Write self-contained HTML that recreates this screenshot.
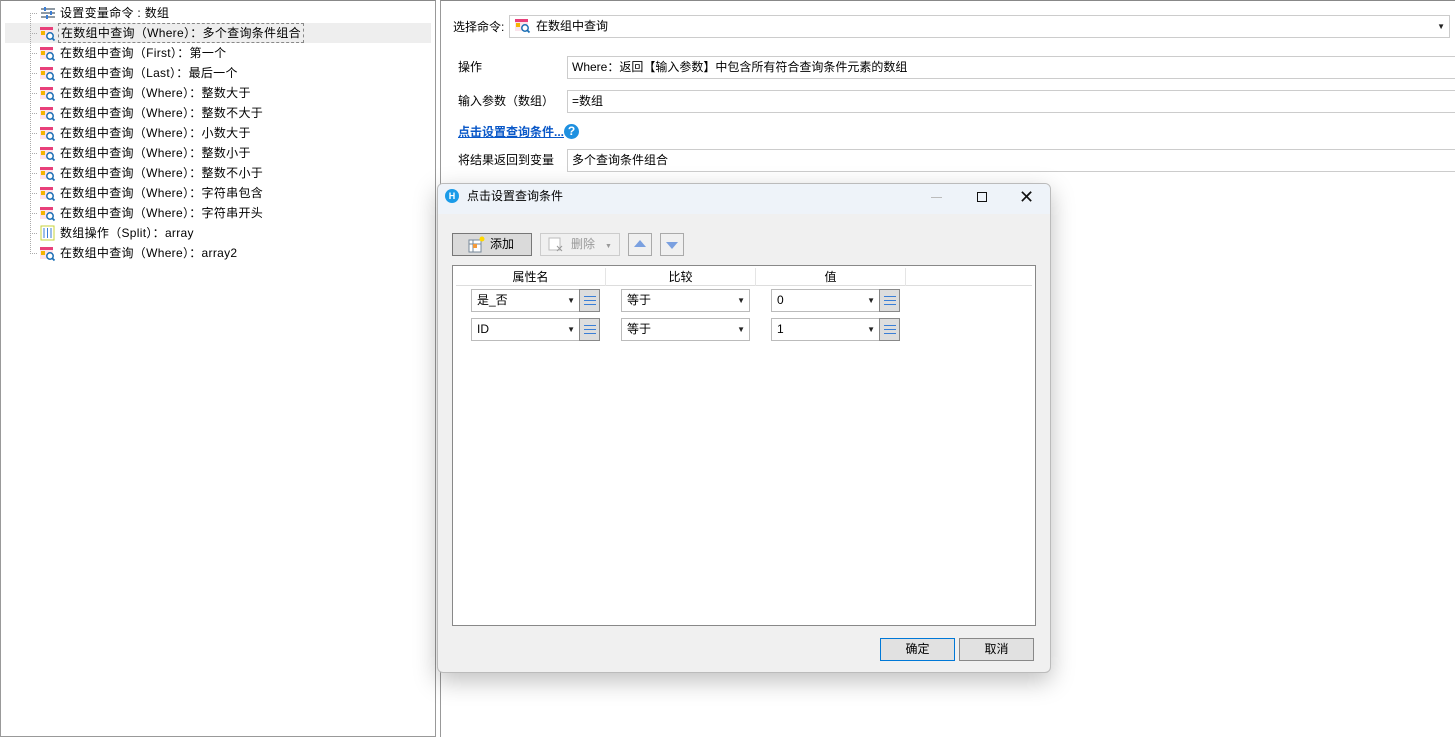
<!DOCTYPE html><html><head><meta charset="utf-8"><style>
*{box-sizing:border-box;margin:0;padding:0}
body{width:1455px;height:737px;background:#fff;position:relative;overflow:hidden;font-family:"Liberation Sans","Noto Sans CJK SC",sans-serif;font-size:12px;color:#000}
.a{position:absolute}
.row{position:absolute;left:60px;height:20px;line-height:20px;white-space:nowrap;letter-spacing:0.3px}
.inp{position:absolute;border:1px solid #ccc;background:#fff;height:23px;line-height:21px;padding-left:4px;white-space:nowrap}
.cb{position:absolute;border:1px solid #bbb;background:#fff;height:23px;line-height:21px;padding-left:5px}
.cb:after{content:"▼";position:absolute;right:4px;top:0;font-size:8px;color:#222}
.eb{position:absolute;width:21px;height:23px;border:1px solid #888;background:#ddd}
.btn{position:absolute;height:23px;line-height:21px;text-align:center;border:1px solid #888;background:#e1e1e1}
</style></head><body>
<div class="a" style="left:0;top:0;width:436px;height:737px;border:1px solid #999;border-top-color:#888"></div>
<div class="a" style="left:5px;top:23px;width:426px;height:20px;background:#eee"></div>
<div class="a" style="left:30px;top:13px;width:1px;height:241px;border-left:1px dotted #aaa"></div>
<svg class="a" style="left:0;top:0" width="440" height="270">
<g stroke="#aaa" stroke-dasharray="1 1">
<line x1="30" y1="13.5" x2="38" y2="13.5"/><line x1="30" y1="33.5" x2="38" y2="33.5"/><line x1="30" y1="53.5" x2="38" y2="53.5"/><line x1="30" y1="73.5" x2="38" y2="73.5"/><line x1="30" y1="93.5" x2="38" y2="93.5"/><line x1="30" y1="113.5" x2="38" y2="113.5"/><line x1="30" y1="133.5" x2="38" y2="133.5"/><line x1="30" y1="153.5" x2="38" y2="153.5"/><line x1="30" y1="173.5" x2="38" y2="173.5"/><line x1="30" y1="193.5" x2="38" y2="193.5"/><line x1="30" y1="213.5" x2="38" y2="213.5"/><line x1="30" y1="233.5" x2="38" y2="233.5"/><line x1="30" y1="253.5" x2="38" y2="253.5"/></g>
<g stroke="#456" stroke-width="1.2"><line x1="41" y1="9" x2="55" y2="9"/><line x1="41" y1="13" x2="55" y2="13"/><line x1="41" y1="17" x2="55" y2="17"/></g>
<g fill="#3a7ed6"><rect x="44" y="7" width="2" height="4"/><rect x="50" y="11" width="2" height="4"/><rect x="46" y="15" width="2" height="4"/></g>
<defs><g id="q"><rect x="0" y="0" width="13" height="3" fill="#e8407a"/><rect x="0" y="3" width="13" height="9" fill="#fbe3ea"/><rect x="1" y="4" width="4" height="4" fill="#f5b400"/><circle cx="10" cy="9" r="3.2" fill="#fff" stroke="#1b6fb5" stroke-width="1.5"/><line x1="12" y1="11" x2="14.5" y2="13.5" stroke="#1b6fb5" stroke-width="1.8"/></g></defs>
<use href="#q" x="40" y="27"/><use href="#q" x="40" y="47"/><use href="#q" x="40" y="67"/><use href="#q" x="40" y="87"/><use href="#q" x="40" y="107"/><use href="#q" x="40" y="127"/><use href="#q" x="40" y="147"/><use href="#q" x="40" y="167"/><use href="#q" x="40" y="187"/><use href="#q" x="40" y="207"/><use href="#q" x="40" y="247"/>
<rect x="41" y="226" width="13" height="14" fill="#fff" stroke="#c7d33a"/><g stroke="#3a7ed6"><line x1="44" y1="228" x2="44" y2="238"/><line x1="47.5" y1="228" x2="47.5" y2="238"/><line x1="51" y1="228" x2="51" y2="238"/></g>
</svg>
<div class="row" style="top:3px">设置变量命令 : 数组</div>
<div class="row" style="top:23px;left:58px;padding:0 2px;height:20px;border:1px dashed #888;line-height:18px">在数组中查询（Where）：多个查询条件组合</div>
<div class="row" style="top:43px">在数组中查询（First）：第一个</div>
<div class="row" style="top:63px">在数组中查询（Last）：最后一个</div>
<div class="row" style="top:83px">在数组中查询（Where）：整数大于</div>
<div class="row" style="top:103px">在数组中查询（Where）：整数不大于</div>
<div class="row" style="top:123px">在数组中查询（Where）：小数大于</div>
<div class="row" style="top:143px">在数组中查询（Where）：整数小于</div>
<div class="row" style="top:163px">在数组中查询（Where）：整数不小于</div>
<div class="row" style="top:183px">在数组中查询（Where）：字符串包含</div>
<div class="row" style="top:203px">在数组中查询（Where）：字符串开头</div>
<div class="row" style="top:223px">数组操作（Split）：array</div>
<div class="row" style="top:243px">在数组中查询（Where）：array2</div>
<div class="a" style="left:440px;top:0;width:1020px;height:737px;border-left:1px solid #999;border-top:1px solid #888"></div>
<div class="a" style="left:453px;top:18px;line-height:18px">选择命令:</div>
<div class="cb" style="left:509px;top:15px;width:941px;border-color:#ccc;padding-left:26px">在数组中查询</div>
<svg class="a" style="left:515px;top:19px" width="16" height="16"><use href="#q" x="0" y="0"/></svg>
<div class="a" style="left:458px;top:58px;line-height:18px">操作</div>
<div class="inp" style="left:567px;top:56px;width:900px">Where：返回【输入参数】中包含所有符合查询条件元素的数组</div>
<div class="a" style="left:458px;top:92px;line-height:18px">输入参数（数组）</div>
<div class="inp" style="left:567px;top:90px;width:900px">=数组</div>
<div class="a" style="left:458px;top:123px;line-height:18px;color:#0a58c8;text-decoration:underline;font-weight:bold">点击设置查询条件...</div>
<div class="a" style="left:564px;top:124px;width:15px;height:15px;border-radius:50%;background:#1e90e0;color:#fff;font-weight:bold;font-size:12px;text-align:center;line-height:15px">?</div>
<div class="a" style="left:458px;top:151px;line-height:18px">将结果返回到变量</div>
<div class="inp" style="left:567px;top:149px;width:900px">多个查询条件组合</div>
<div class="a" style="left:437px;top:183px;width:614px;height:490px;background:#f0f0f0;border:1px solid #bbb;border-radius:6px;box-shadow:0 8px 24px rgba(0,0,0,.25);overflow:hidden">
<div class="a" style="left:0;top:0;width:614px;height:30px;background:#eef3f9"></div>
</div>
<div class="a" style="left:445px;top:189px;width:14px;height:14px;border-radius:50%;background:#1a9be8;color:#fff;font-size:9px;font-weight:bold;text-align:center;line-height:14px">H</div>
<div class="a" style="left:467px;top:188px;line-height:16px">点击设置查询条件</div>
<div class="a" style="left:931px;top:197px;width:11px;height:1px;background:#bbb"></div>
<div class="a" style="left:977px;top:192px;width:10px;height:10px;border:1px solid #111"></div>
<div class="a" style="left:1019px;top:187px;font-size:18px;line-height:20px;color:#111">✕</div>
<div class="btn" style="left:452px;top:233px;width:80px;background:#dadada;border-color:#777;padding-left:20px">添加</div>
<svg class="a" style="left:467px;top:236px" width="18" height="18"><rect x="2" y="4" width="12" height="12" fill="#fff" stroke="#789"/><line x1="2" y1="8" x2="14" y2="8" stroke="#789"/><line x1="6" y1="4" x2="6" y2="16" stroke="#789"/><rect x="6" y="8" width="4" height="4" fill="#f59b3a"/><circle cx="15" cy="3" r="2.5" fill="#ffd800"/></svg>
<div class="btn" style="left:540px;top:233px;width:80px;background:#f0f0f0;border-color:#ccc;color:#999;text-align:left;padding-left:30px">删除<span style="font-size:7px;margin-left:10px">▼</span></div>
<svg class="a" style="left:548px;top:237px" width="16" height="16"><rect x="1" y="1" width="11" height="12" fill="#fff" stroke="#bbb"/><path d="M9 9l5 5M14 9l-5 5" stroke="#999"/></svg>
<div class="btn" style="left:628px;top:233px;width:24px;background:#f0f0f0;border-color:#aaa"></div>
<div class="a" style="left:634px;top:240px;width:0;height:0;border-left:6px solid transparent;border-right:6px solid transparent;border-bottom:7px solid #7aa0e0"></div>
<div class="btn" style="left:660px;top:233px;width:24px;background:#f0f0f0;border-color:#aaa"></div>
<div class="a" style="left:666px;top:242px;width:0;height:0;border-left:6px solid transparent;border-right:6px solid transparent;border-top:7px solid #7aa0e0"></div>
<div class="a" style="left:452px;top:265px;width:584px;height:361px;background:#fff;border:1px solid #888"></div>
<div class="a" style="left:456px;top:268px;width:576px;height:18px;border-bottom:1px solid #ddd"></div>
<div class="a" style="left:456px;top:268px;width:150px;text-align:center;line-height:18px;border-right:1px solid #e5e5e5">属性名</div>
<div class="a" style="left:606px;top:268px;width:150px;text-align:center;line-height:18px;border-right:1px solid #e5e5e5">比较</div>
<div class="a" style="left:756px;top:268px;width:150px;text-align:center;line-height:18px;border-right:1px solid #e5e5e5">值</div>
<div class="cb" style="left:471px;top:289px;width:109px">是_否</div><div class="eb" style="left:579px;top:289px"></div>
<div class="cb" style="left:621px;top:289px;width:129px">等于</div>
<div class="cb" style="left:771px;top:289px;width:109px">0</div><div class="eb" style="left:879px;top:289px"></div>
<div class="cb" style="left:471px;top:318px;width:109px">ID</div><div class="eb" style="left:579px;top:318px"></div>
<div class="cb" style="left:621px;top:318px;width:129px">等于</div>
<div class="cb" style="left:771px;top:318px;width:109px">1</div><div class="eb" style="left:879px;top:318px"></div>
<svg class="a" style="left:0;top:0" width="1000" height="400"><defs><g id="e" stroke="#3a7ed6"><line x1="0" y1="0.5" x2="12" y2="0.5"/><line x1="0" y1="4.5" x2="12" y2="4.5"/><line x1="0" y1="8.5" x2="12" y2="8.5"/></g></defs>
<use href="#e" x="584" y="296"/><use href="#e" x="884" y="296"/><use href="#e" x="584" y="325"/><use href="#e" x="884" y="325"/></svg>
<div class="btn" style="left:880px;top:638px;width:75px;border-color:#0078d7">确定</div>
<div class="btn" style="left:959px;top:638px;width:75px">取消</div>
</body></html>
